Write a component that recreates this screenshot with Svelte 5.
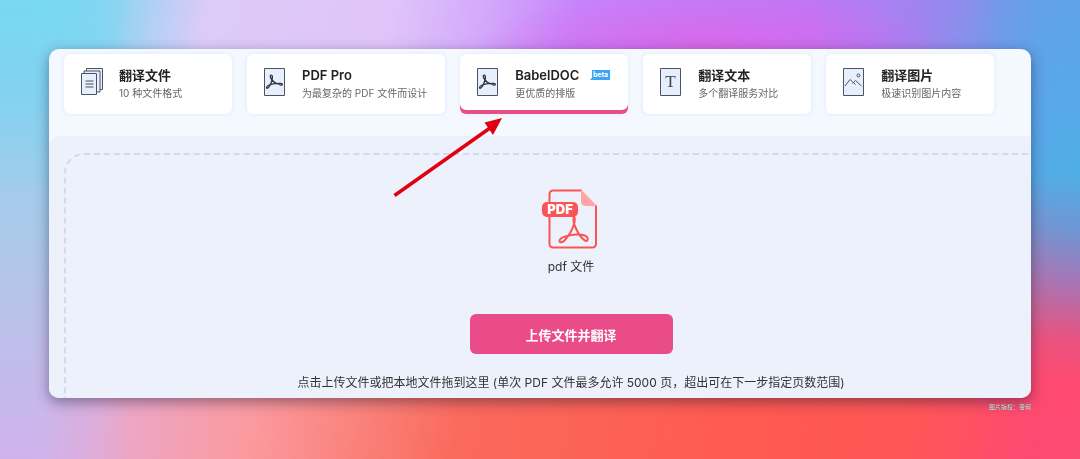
<script lang="ts">
	interface Tool {
		id: string;
		title: string;
		desc: string;
		icon: 'files' | 'pdf' | 'text' | 'image';
		badge?: string;
	}

	const tools: Tool[] = [
		{ id: 'files', title: '翻译文件', desc: '10 种文件格式', icon: 'files' },
		{ id: 'pdf-pro', title: 'PDF Pro', desc: '为最复杂的 PDF 文件而设计', icon: 'pdf' },
		{ id: 'babeldoc', title: 'BabelDOC', desc: '更优质的排版', icon: 'pdf', badge: 'beta' },
		{ id: 'text', title: '翻译文本', desc: '多个翻译服务对比', icon: 'text' },
		{ id: 'image', title: '翻译图片', desc: '极速识别图片内容', icon: 'image' }
	];

	let active = $state('babeldoc');
	let fileInput: HTMLInputElement;
</script>

<div class="stage">
	<main class="window">
		<nav class="tools">
			{#each tools as tool (tool.id)}
				<button
					type="button"
					class="tool"
					class:active={active === tool.id}
					aria-pressed={active === tool.id}
					onclick={() => (active = tool.id)}
				>
					<svg class="tool-icon" viewBox="0 0 24 30" aria-hidden="true">
						{#if tool.icon === 'files'}
							<path d="M6.5 1.5h16v21h-16z" />
							<path d="M4 4h16v21H4z" />
							<path d="M1.5 6.5h15v21h-15z" />
							<path d="M5.500 14h8M5.500 17h8M5.500 20h8" />
						{:else}
							<path d="M1.5 1.5h20v27h-20z" />
						{/if}
						{#if tool.icon === 'pdf'}
							<path
								class="line"
								d="M9 13c-1.800-2-2.300-4.500-1-4.800 1.500-.3 1.800 2.300 1 4.800zM9 13c-.6 2.500-1.700 5-2.800 6.500M6.200 19.500c-1 1.700-2.600 2.300-2.700 1.200 0-1 1.200-2 2.700-2.700 2.500-1 5.500-1.500 8.300-1.600M9 13c1.200 1.600 3 3 5.500 3.800M14.500 16.600c2-.5 4.800-.3 4.900.7.100 1.300-2.700 1-4.900-.7z"
							/>
						{:else if tool.icon === 'text'}
							<text x="11.500" y="20" text-anchor="middle">T</text>
						{:else if tool.icon === 'image'}
							<path class="thin" d="M3 19l5-6.500 5.500 5M10.500 16.500l3-3 6 5.500" />
							<circle class="thin" cx="16.500" cy="8.500" r="1.500" />
						{/if}
					</svg>
					<span class="tool-text">
						<span class="tool-title">
							{tool.title}
							{#if tool.badge}
								<span class="badge">{tool.badge}</span>
							{/if}
						</span>
						<span class="tool-desc">{tool.desc}</span>
					</span>
				</button>
			{/each}
		</nav>

		<section class="upload">
			<div class="dropzone">
				<svg class="pdf-icon" viewBox="0 0 58 60" aria-hidden="true">
					<path
						d="M40 1.500H11a3.500 3.500 0 0 0-3.500 3.500v50a3.500 3.500 0 0 0 3.500 3.500h39.500a3.500 3.500 0 0 0 3.500-3.500V16"
						fill="none"
						stroke="#fa5454"
						stroke-width="2"
					/>
					<path d="M39 .5L55 17H44q-5 0-5-5z" fill="#ffa5a5" />
					<path
						d="M32 27c-1.500 4-.5 7 1.500 11.500 2.500 5.500 6 11 9.500 13 2.500 1.300 4-1.500 2-3.500-3-3-12-3-18-1.500-5 1-9.500 3-9.500 5.500 0 2 3 1.500 5-.5 4-4.500 8-11 9.500-16.500 1-3 1-6 0-8z"
						fill="none"
						stroke="#fa5454"
						stroke-width="2"
						stroke-linejoin="round"
					/>
					<rect x="0" y="13" width="36" height="15" rx="5" fill="#fa5454" />
					<text x="18" y="25" text-anchor="middle">PDF</text>
				</svg>
				<p class="file-type">pdf 文件</p>
				<input bind:this={fileInput} type="file" accept=".pdf" aria-label="pdf 文件" hidden />
				<button type="button" class="upload-btn" onclick={() => fileInput.click()}>
					上传文件并翻译
				</button>
				<p class="hint">
					点击上传文件或把本地文件拖到这里 (单次 PDF 文件最多允许 5000 页，超出可在下一步指定页数范围)
				</p>
			</div>
		</section>

		<svg class="arrow" viewBox="0 0 110 80" aria-hidden="true">
			<path d="M2.500 77.500L98 10" stroke="#e00010" stroke-width="3.500" />
			<path d="M110 0L92.500 4.500L101 17z" fill="#e00010" />
		</svg>
	</main>
	<p class="credit">图片版权：苍何</p>
</div>

<style>
	:global(body) {
		margin: 0;
	}

	.stage {
		position: relative;
		z-index: 0;
		box-sizing: border-box;
		min-height: 100vh;
		padding: 49px 49px 40px;
		font-family: Inter, 'Noto Sans CJK SC', sans-serif;
		background: linear-gradient(
			100deg,
			#cdb1ec 0%,
			#e9a9cf 15%,
			#fb9a9f 28%,
			#fa8079 38%,
			#fa6a5c 46%,
			#ff5a50 70%,
			#ff5755 84%,
			#ff4a70 96%,
			#f84a78 100%
		);
	}

	/* upper half of the wallpaper */
	.stage::before {
		content: '';
		position: absolute;
		inset: 0;
		z-index: -1;
		background:
			radial-gradient(ellipse 22% 14% at 66% 11%, rgba(220, 100, 232, 0.9), transparent),
			linear-gradient(
				100deg,
				#78d8f2 4%,
				#8cd5f2 10%,
				#b8cff5 14%,
				#dccbf8 18%,
				#e0c4f9 34%,
				#d3a8fb 42%,
				#c684fb 50%,
				#bd78f6 70%,
				#a283f0 79%,
				#7c96ea 86%,
				#62a1e8 92%,
				#50ade6 100%
			);
		mask-image: linear-gradient(#000 38%, transparent 78%);
	}

	/* left and right edges */
	.stage::after {
		content: '';
		position: absolute;
		inset: 0;
		z-index: -1;
		background:
			linear-gradient(#78d8f2, #84d2f0 22%, #a6cbea 44%, #b9c2e9 68%, #cfb2ed) left / 50% 100%
				no-repeat,
			linear-gradient(
					#60a2e8,
					#50aee6 38%,
					#6f96d4 50%,
					#a874b4 62%,
					#e8527f 74%,
					#ff4a70 84%,
					#fb4a74
				)
				right / 50% 100% no-repeat;
		mask-image: linear-gradient(90deg, #000 3%, transparent 12%, transparent 90%, #000 99%);
	}

	.window {
		position: relative;
		overflow: hidden;
		border-radius: 10px;
		background: #f4f8ff;
		filter: drop-shadow(0 4px 7px rgba(20, 20, 50, 0.45));
	}

	.tools {
		display: flex;
		gap: 15px;
		padding: 5px 15px 22px;
	}

	.tool {
		display: flex;
		align-items: flex-start;
		gap: 15px;
		box-sizing: border-box;
		min-width: 168px;
		padding: 12px 18px 12px 16px;
		border: 0;
		border-radius: 6px;
		background: #fff;
		box-shadow: 0 0 4px #dce8fa;
		font-family: inherit;
		text-align: left;
		white-space: nowrap;
		cursor: pointer;
	}

	.tool.active {
		box-shadow:
			inset 0 -4px 0 #ea4c89,
			0 0 4px #dce8fa;
	}

	.tool-icon {
		flex: none;
		width: 24px;
		height: 30px;
		margin-top: 1px;
		fill: #e8effc;
		stroke: #4b5260;
		stroke-width: 1;
	}

	.tool-icon .line {
		fill: none;
		stroke: #30343d;
		stroke-width: 1.3;
		stroke-linejoin: round;
	}

	.tool-icon .thin {
		fill: none;
	}

	.tool-icon text {
		font: 17px 'Liberation Serif', serif;
		fill: #3c424e;
		stroke: none;
	}

	.tool-text {
		flex: 1;
		display: flex;
		flex-direction: column;
	}

	.tool-title {
		display: flex;
		align-items: center;
		justify-content: space-between;
		font-size: 13px;
		font-weight: 600;
		line-height: 18px;
		color: #222;
	}

	.tool-desc {
		font-size: 10px;
		line-height: 18px;
		color: #666;
	}

	.badge {
		padding: 0 2px 0 3px;
		background: #3ba4f4;
		clip-path: polygon(10% 0, 100% 0, 100% 100%, 0 100%, 10% 80%);
		font-size: 7px;
		font-weight: 700;
		line-height: 10px;
		color: #fff;
	}

	.upload {
		padding: 17px 0 0 15px;
		border-radius: 10px 0 0;
		background: #edf1fc;
	}

	.dropzone {
		display: flex;
		flex-direction: column;
		align-items: center;
		margin-right: -47px;
		padding: 34px 0 5px;
		border: 2px dashed #d6d9ec;
		border-bottom: 0;
		border-radius: 20px 20px 0 0;
	}

	.pdf-icon {
		width: 58px;
		height: 60px;
	}

	.pdf-icon text {
		font: 900 13px Inter, sans-serif;
		fill: #fff;
	}

	.file-type,
	.hint {
		margin: 0;
		font-size: 12px;
		line-height: 20px;
		color: #333;
	}

	.file-type {
		margin-top: 8px;
	}

	.upload-btn {
		width: 203px;
		height: 40px;
		margin: 37px 0 19px;
		border: 0;
		border-radius: 6px;
		background: #ea4c89;
		font-family: inherit;
		font-size: 13px;
		font-weight: 700;
		color: #fff;
		cursor: pointer;
	}

	.arrow {
		position: absolute;
		top: 69px;
		left: 343px;
		width: 110px;
		height: 80px;
		pointer-events: none;
	}

	.credit {
		margin: 4px 0 0;
		font-size: 6px;
		line-height: 10px;
		text-align: right;
		color: #fff;
		text-shadow: 0 0 1px #333;
	}
</style>
